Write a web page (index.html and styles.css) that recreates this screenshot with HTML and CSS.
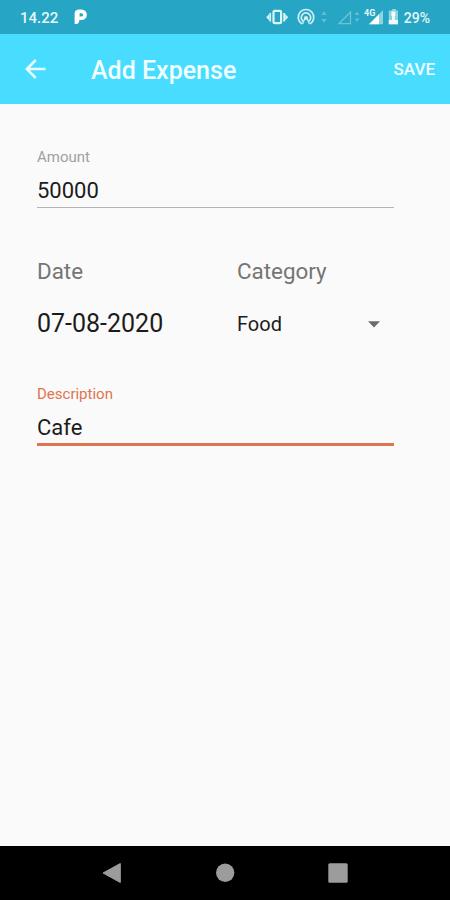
FILE: index.html
```html
<!DOCTYPE html>
<html lang="en">
<head>
  <meta charset="UTF-8" />
  <meta name="viewport" content="width=device-width, initial-scale=1" />
  <title>Add Expense</title>
  <link rel="stylesheet" href="styles.css">
</head>
<body>
<div class="status-bar">
  <span class="clock">14.22</span>
  <svg class="app-icon" width="14" height="16" viewBox="0 0 14 16">
    <path d="M.6 15V5Q.6 .4 5 .4H7.6A5.3 5.3 0 0 1 7.6 11H5.4Q5 14.8 2.4 15zM5.6 4.3V7.6H7.4A1.6 1.6 0 0 0 7.4 4.3z" fill="#fff" fill-rule="evenodd"/>
  </svg>
  <svg class="status-icons" width="134" height="24" viewBox="0 0 134 24">
    <!-- vibrate -->
    <rect x="7.5" y="5.9" width="7.6" height="12.2" rx="1.2" fill="none" stroke="#d9f5f8" stroke-width="2.2"/>
    <path d="M4.2 8V16.5M18.2 8V16.5" stroke="#d9f5f8" stroke-width="1.8"/>
    <path d="M3.2 9L.2 12.2L3.2 15.5zM19.2 9L22.2 12.2L19.2 15.5z" fill="#d9f5f8"/>
    <!-- hotspot -->
    <g fill="none" stroke="#d0f0f4" stroke-width="1.7">
      <path d="M36 19A7.8 7.8 0 1 1 44 19"/>
      <path d="M37.2 16.4A4.7 4.7 0 1 1 42.8 16.4"/>
    </g>
    <circle cx="40" cy="13" r="2" fill="#d0f0f4"/>
    <path d="M39 13L36.6 19M41 13L43.4 19" stroke="#d0f0f4" stroke-width="1.2"/>
    <path d="M55.4 10L58 6L60.6 10zM55.4 14L58 18L60.6 14z" fill="#63bed2"/>
    <!-- signal -->
    <path d="M73 18.7H84.5V7z" fill="none" stroke="#6cc5d5" stroke-width="1.3"/>
    <path d="M88.6 10L91 6.5L93.4 10zM88.6 13.5L91 17L93.4 13.5z" fill="#63bed2"/>
    <text class="network" x="98" y="10.5">4G</text>
    <path d="M103 19.2H117V5.2z" fill="#8ed4df"/>
    <path d="M103 19.2H113V9.2z" fill="#fff"/>
    <!-- battery -->
    <path d="M124 5.5H126V4H130V5.5H132V19.2H122.8V5.5z" fill="#8ed4df"/>
    <path d="M122.8 15H132V19.2H122.8zM125.4 6.5H129.4V11H128.8V15H126V11H125.4z" fill="#f2fcfc"/>
  </svg>
  <span class="battery">29%</span>
</div>

<header class="app-bar">
  <svg class="back" width="22" height="20" viewBox="0 0 22 20">
    <path d="M20.5 10H2M10.8 1L1.8 10L10.8 19" fill="none" stroke="#e8fdfe" stroke-width="2.5"/>
  </svg>
  <h1>Add Expense</h1>
  <span class="save">SAVE</span>
</header>

<main class="form">
  <div class="field">
    <div class="label">Amount</div>
    <div class="value">50000</div>
  </div>

  <div class="row">
    <div class="column">
      <div class="heading">Date</div>
      <div class="date">07-08-2020</div>
    </div>
    <div class="column">
      <div class="heading">Category</div>
      <div class="select">
        <span>Food</span>
        <svg width="12" height="7" viewBox="0 0 12 7"><path d="M0 .3H12L6 6.5z" fill="#6b6b6b"/></svg>
      </div>
    </div>
  </div>

  <div class="field active">
    <div class="label">Description</div>
    <div class="value">Cafe</div>
  </div>
</main>

<nav class="nav-bar">
  <svg width="20" height="22" viewBox="0 0 20 22"><path d="M1 11L18.3 1.5V20.5z" fill="#9c9c9c" stroke="#9c9c9c" stroke-linejoin="round"/></svg>
  <svg width="20" height="22" viewBox="0 0 20 22"><circle cx="10.2" cy="10.7" r="9.2" fill="#9c9c9c"/></svg>
  <svg width="20" height="22" viewBox="0 0 20 22"><rect x=".3" y="1.3" width="19.4" height="19.4" rx="1.5" fill="#9c9c9c"/></svg>
</nav>
</body>
</html>
```

FILE: styles.css
```css
body {
  font-family: Roboto, sans-serif;
  margin: 0;
  height: 900px;
  background: #fafafa;
  color: #1c1c1c;
  display: flex;
  flex-direction: column;
}
.status-bar {
  height: 34px;
  background: #26a5c4;
  color: #e6f8fa;
  display: flex;
  align-items: center;
  padding-left: 20px;
  padding-right: 20px;
  box-sizing: border-box;
}
.clock {
  width: 38px;
  font-size: 15px;
  font-weight: 500;
  line-height: 20px;
  padding-top: 2px;
}
.app-icon {
  margin-left: 16px;
}
.status-icons {
  margin-left: auto;
  margin-right: 4px;
}
.network {
  font-size: 9px;
  font-weight: 700;
  fill: #e6f8fa;
}
.battery {
  font-size: 14px;
  font-weight: 500;
  padding-top: 2px;
}
.app-bar {
  height: 70px;
  background: #48dcfe;
  color: #f0feff;
  display: flex;
  align-items: center;
  padding: 0 15px 0 25px;
  box-sizing: border-box;
}
h1 {
  margin: 0 0 0 44px;
  font-size: 25px;
  font-weight: 500;
  line-height: 30px;
  padding-top: 3px;
}
.save {
  margin-left: auto;
  font-size: 17px;
  font-weight: 500;
}
.form {
  flex-grow: 1;
  padding: 43px 56px 0 37px;
}
.label {
  font-size: 15px;
  line-height: 20px;
  color: #a0a0a0;
}
.value {
  font-size: 22px;
  line-height: 28px;
  margin-top: 10px;
  padding-bottom: 2px;
  border-bottom: 1px solid #b4b4b4;
}
.row {
  display: flex;
  margin-top: 49px;
}
.column {
  width: 200px;
}
.column + .column {
  width: 143px;
}
.heading {
  font-size: 22.4px;
  line-height: 28px;
  color: #757575;
}
.date,
.select {
  margin-top: 19px;
  font-size: 25px;
  line-height: 40px;
}
.select {
  font-size: 20px;
  display: flex;
  align-items: center;
  justify-content: space-between;
}
.active {
  margin-top: 40px;
}
.active .label {
  color: #df7450;
}
.active .value {
  margin-top: 8px;
  line-height: 31px;
  padding-bottom: 0;
  border-bottom: 3px solid #df7450;
}
.nav-bar {
  height: 54px;
  background: #000;
  display: flex;
  align-items: center;
  justify-content: center;
  gap: 93px;
}
```
